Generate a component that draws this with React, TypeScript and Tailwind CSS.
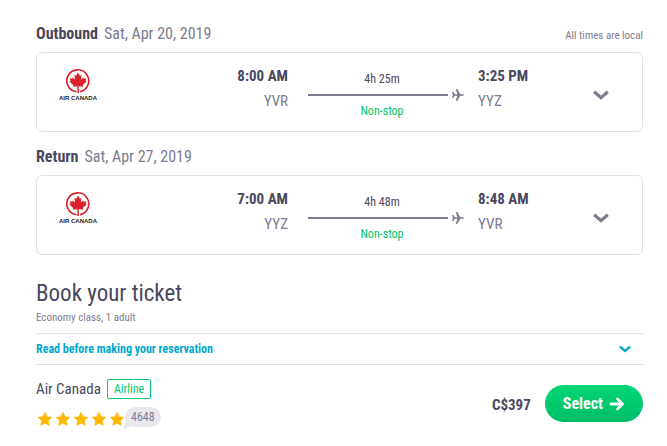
interface Leg {
  label: string;
  date: string;
  departTime: string;
  departCode: string;
  arriveTime: string;
  arriveCode: string;
  duration: string;
}

const LEGS: Leg[] = [
  {
    label: 'Outbound',
    date: 'Sat, Apr 20, 2019',
    departTime: '8:00 AM',
    departCode: 'YVR',
    arriveTime: '3:25 PM',
    arriveCode: 'YYZ',
    duration: '4h 25m',
  },
  {
    label: 'Return',
    date: 'Sat, Apr 27, 2019',
    departTime: '7:00 AM',
    departCode: 'YYZ',
    arriveTime: '8:48 AM',
    arriveCode: 'YVR',
    duration: '4h 48m',
  },
];

function AirCanadaLogo() {
  return (
    <div className="flex w-20 flex-col items-center pt-1.5">
      <svg viewBox="0 0 48 48" className="size-6" aria-hidden="true">
        <path
          d="M21 45.5A22 22 0 1 1 28 45.2"
          fill="none"
          stroke="#d9232a"
          strokeWidth="3.2"
        />
        <path
          d="M24 7l3.8 6.4 3.2-1.6-1 9 4.4-4 1.2 2.6 5-1-1.6 5.4 2.4 1.4-8 6.8 1 3.4-9-1 .6 13.4h-3.2l-.2-13.4-9 1 1-3.4-8-6.8 2.4-1.4-1.6-5.4 5 1 1.2-2.6 4.4 4-1-9 3.2 1.6z"
          fill="#d9232a"
        />
      </svg>
      <span className="whitespace-nowrap pt-px font-['Liberation_Sans',sans-serif] text-[6px] leading-2 font-bold text-[#222]">
        AIR CANADA
      </span>
    </div>
  );
}

function Chevron({ className }: { className: string }) {
  return (
    <svg viewBox="0 0 16 10" className={className} aria-hidden="true">
      <path d="M1.2 1.8L8 7.6 14.8 1.8" fill="none" stroke="currentColor" strokeWidth="3.2" />
    </svg>
  );
}

function Plane() {
  return (
    <svg viewBox="0 0 24 24" className="size-3 shrink-0" fill="currentColor" aria-hidden="true">
      <path d="M0 6h2.6l3.2 4.6h5L7.4 0h2.8l6.6 10.6H21c1.6 0 3 .6 3 1.4s-1.4 1.4-3 1.4h-4.2L10.2 24H7.4l3.4-10.6h-5L2.6 18H0l1.8-6z" />
    </svg>
  );
}

function Star() {
  return (
    <svg viewBox="0 0 24 24" className="size-4" aria-hidden="true">
      <path
        d="M12 2l3.1 6.6 7.1.9-5.2 5 1.3 7.1L12 18.1l-6.3 3.5L7 14.5l-5.2-5 7.1-.9z"
        fill="#ffb700"
        stroke="#ffb700"
        strokeLinejoin="round"
      />
    </svg>
  );
}

function LegCard({ leg }: { leg: Leg }) {
  return (
    <div className="flex items-start rounded-md border border-[#e1e1e8] pt-2.5 pr-6 pb-3 pl-px">
      <div className="flex flex-1 justify-between">
        <AirCanadaLogo />
        <div className="pt-px text-right text-[15px] leading-[25px]">
          <div className="font-bold">{leg.departTime}</div>
          <div className="text-[#7d7b8f]">{leg.departCode}</div>
        </div>
      </div>

      {/* Flight track */}
      <div className="ml-5 w-[156px] pt-2 text-[12px] leading-4">
        <div className="pr-2 text-center">{leg.duration}</div>
        <div className="flex h-4 items-center gap-1 text-[#7d7b8f]">
          <div className="h-0.5 flex-1 bg-[#7d7b8f]" />
          <Plane />
        </div>
        <div className="pr-2 text-center text-[#00c46a]">Non-stop</div>
      </div>

      <div className="ml-3.5 w-[107px] pt-px text-[15px] leading-[25px]">
        <div className="font-bold">{leg.arriveTime}</div>
        <div className="text-[#7d7b8f]">{leg.arriveCode}</div>
      </div>

      <button
        type="button"
        aria-label={`${leg.label} flight details`}
        className="mr-px flex w-8 justify-center self-center pt-2 text-[#7d7b8f]"
      >
        <Chevron className="h-2.5 w-4" />
      </button>
    </div>
  );
}

export default function App() {
  return (
    <main className="bg-white pt-5 pr-6 pb-4 pl-9 font-['Roboto_Condensed','Arial_Narrow','Roboto','Liberation_Sans',sans-serif] text-[#4a475c]">
      {LEGS.map((leg, i) => (
        <section key={leg.label} className="mb-[11px]">
          <div className="mb-1 flex items-center justify-between leading-7">
            <h2 className="text-base leading-7">
              <span className="mr-1.5 font-bold">{leg.label}</span>
              <span className="text-[#7d7b8f]">{leg.date}</span>
            </h2>
            {i === 0 && <span className="pt-1 text-[11px] leading-6 text-[#7d7b8f]">All times are local</span>}
          </div>
          <LegCard leg={leg} />
        </section>
      ))}

      <section className="pt-3">
        <h1 className="text-[23px] leading-8">Book your ticket</h1>
        <p className="text-[11px] leading-4 text-[#7d7b8f]">Economy class, 1 adult</p>

        <button
          type="button"
          className="mt-[7px] flex w-full items-center justify-between border-y border-[#e1e1e8] py-[7px] pr-3 text-[12px] leading-4 font-bold text-[#00a9ce]"
        >
          Read before making your reservation
          <Chevron className="h-2 w-3" />
        </button>

        <div className="flex items-start justify-between pt-3.5">
          <div>
            <div className="flex items-center gap-1.5">
              <span className="text-[15px] leading-5">Air Canada</span>
              <span className="rounded-xs border border-[#00c972] px-1.5 text-[12px] leading-[18px] text-[#00c972]">
                Airline
              </span>
            </div>
            <div className="mt-2 flex items-center pl-px">
              <div className="flex gap-0.5" role="img" aria-label="5 out of 5 stars">
                <Star />
                <Star />
                <Star />
                <Star />
                <Star />
              </div>
              <span className="relative mb-1 rounded-full bg-[#e9e8ef] px-1.5 text-[12px] leading-5 text-[#7d7b8f]">
                4648
                <svg viewBox="0 0 8 8" className="absolute -bottom-0.5 -left-0.5 size-2" aria-hidden="true">
                  <path d="M2.5 0L0 7q0 1 1 1L8 5z" fill="#e9e8ef" />
                </svg>
              </span>
            </div>
          </div>

          <div className="flex items-center gap-3.5 pt-1.5">
            <span className="pt-1 text-[15px] font-bold">C$397</span>
            <button
              type="button"
              className="flex items-center gap-1.5 rounded-full bg-linear-to-b from-[#00d775] to-[#00bd68] px-[18px] py-1.5 text-base leading-[25px] font-bold text-white"
            >
              Select
              <svg viewBox="0 0 16 16" className="size-4" aria-hidden="true">
                <path
                  d="M2 8h11M8.5 3l5 5-5 5"
                  fill="none"
                  stroke="currentColor"
                  strokeWidth="2.8"
                  strokeLinecap="round"
                  strokeLinejoin="round"
                />
              </svg>
            </button>
          </div>
        </div>
      </section>
    </main>
  );
}
